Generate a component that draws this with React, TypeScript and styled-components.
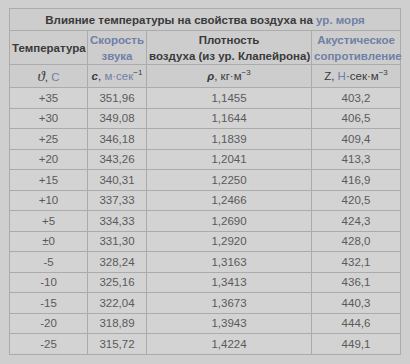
import styled, { createGlobalStyle } from 'styled-components';

const rows: [string, string, string, string][] = [
    ['+35', '351,96', '1,1455', '403,2'],
    ['+30', '349,08', '1,1644', '406,5'],
    ['+25', '346,18', '1,1839', '409,4'],
    ['+20', '343,26', '1,2041', '413,3'],
    ['+15', '340,31', '1,2250', '416,9'],
    ['+10', '337,33', '1,2466', '420,5'],
    ['+5', '334,33', '1,2690', '424,3'],
    ['±0', '331,30', '1,2920', '428,0'],
    ['-5', '328,24', '1,3163', '432,1'],
    ['-10', '325,16', '1,3413', '436,1'],
    ['-15', '322,04', '1,3673', '440,3'],
    ['-20', '318,89', '1,3943', '444,6'],
    ['-25', '315,72', '1,4224', '449,1'],
];

const App = () => {
    return (
        <Page>
            <GlobalStyle />
            <Table>
                <colgroup>
                    <col style={{ width: 78 }} />
                    <col style={{ width: 59 }} />
                    <col style={{ width: 165 }} />
                    <col />
                </colgroup>
                <thead>
                    <TitleRow>
                        <Th colSpan={4}>
                            Влияние температуры на свойства воздуха на{' '}
                            <Link>ур. моря</Link>
                        </Th>
                    </TitleRow>
                    <HeadRow>
                        <Th>Температура</Th>
                        <Th>
                            <Link>
                                Скорость
                                <br />
                                звука
                            </Link>
                        </Th>
                        <Th>
                            Плотность
                            <br />
                            воздуха (из ур. Клапейрона)
                        </Th>
                        <Th>
                            <Link>
                                Акустическое
                                <br />
                                сопротивление
                            </Link>
                        </Th>
                    </HeadRow>
                    <UnitRow>
                        <Th>
                            <Theta>ϑ</Theta>, <Link>С</Link>
                        </Th>
                        <Th>
                            <i>c</i>, <Link>м·сек</Link>
                            <sup>−1</sup>
                        </Th>
                        <Th>
                            <i>ρ</i>, кг·м<sup>−3</sup>
                        </Th>
                        <Th>
                            Z, <Link>Н</Link>·сек·м<sup>−3</sup>
                        </Th>
                    </UnitRow>
                </thead>
                <tbody>
                    {rows.map((r) => (
                        <DataRow key={r[0]}>
                            {r.map((v, i) => (
                                <Td key={i}>{v}</Td>
                            ))}
                        </DataRow>
                    ))}
                </tbody>
            </Table>
        </Page>
    );
};

export default App;

const GlobalStyle = createGlobalStyle`
    html, body {
        margin: 0;
        background: #cfcfcf;
    }
    body {
        font-family: "Liberation Sans", Arial, sans-serif;
    }
`;

const Page = styled.div`
    width: 410px;
    height: 364px;
    padding: 8px 0 0 9px;
    box-sizing: border-box;
    overflow: hidden;
`;

const Table = styled.table`
    width: 392px;
    table-layout: fixed;
    border-collapse: collapse;
    background: #d3d3d3;
    border: 1px solid #ababab;
    color: #4a4a4a;
    font-size: 11.5px;
`;

const Th = styled.th`
    border: 1px solid #ababab;
    background: #cdcdcd;
    color: #3a3a3a;
    font-weight: bold;
    text-align: center;
    padding: 0 2px;
    line-height: 16px;
    white-space: nowrap;

    sup {
        font-size: 8px;
        line-height: 0;
        vertical-align: 5px;
    }
`;

const TitleRow = styled.tr`
    height: 22px;
    ${Th} {
        font-size: 11.5px;
        padding-top: 1px;
    }
`;

const HeadRow = styled.tr`
    height: 34px;
`;

const UnitRow = styled.tr`
    height: 23px;
    ${Th} {
        font-weight: normal;
    }
    i {
        font-weight: bold;
    }
`;

const Theta = styled.span`
    font-family: "Liberation Serif", serif;
    font-style: italic;
    font-size: 15px;
`;

const Link = styled.span`
    color: #7080a6;
`;

const DataRow = styled.tr`
    height: 20.5px;
`;

const Td = styled.td`
    border: 1px solid #ababab;
    text-align: center;
    padding: 0;
    color: #5a5a5a;
`;
